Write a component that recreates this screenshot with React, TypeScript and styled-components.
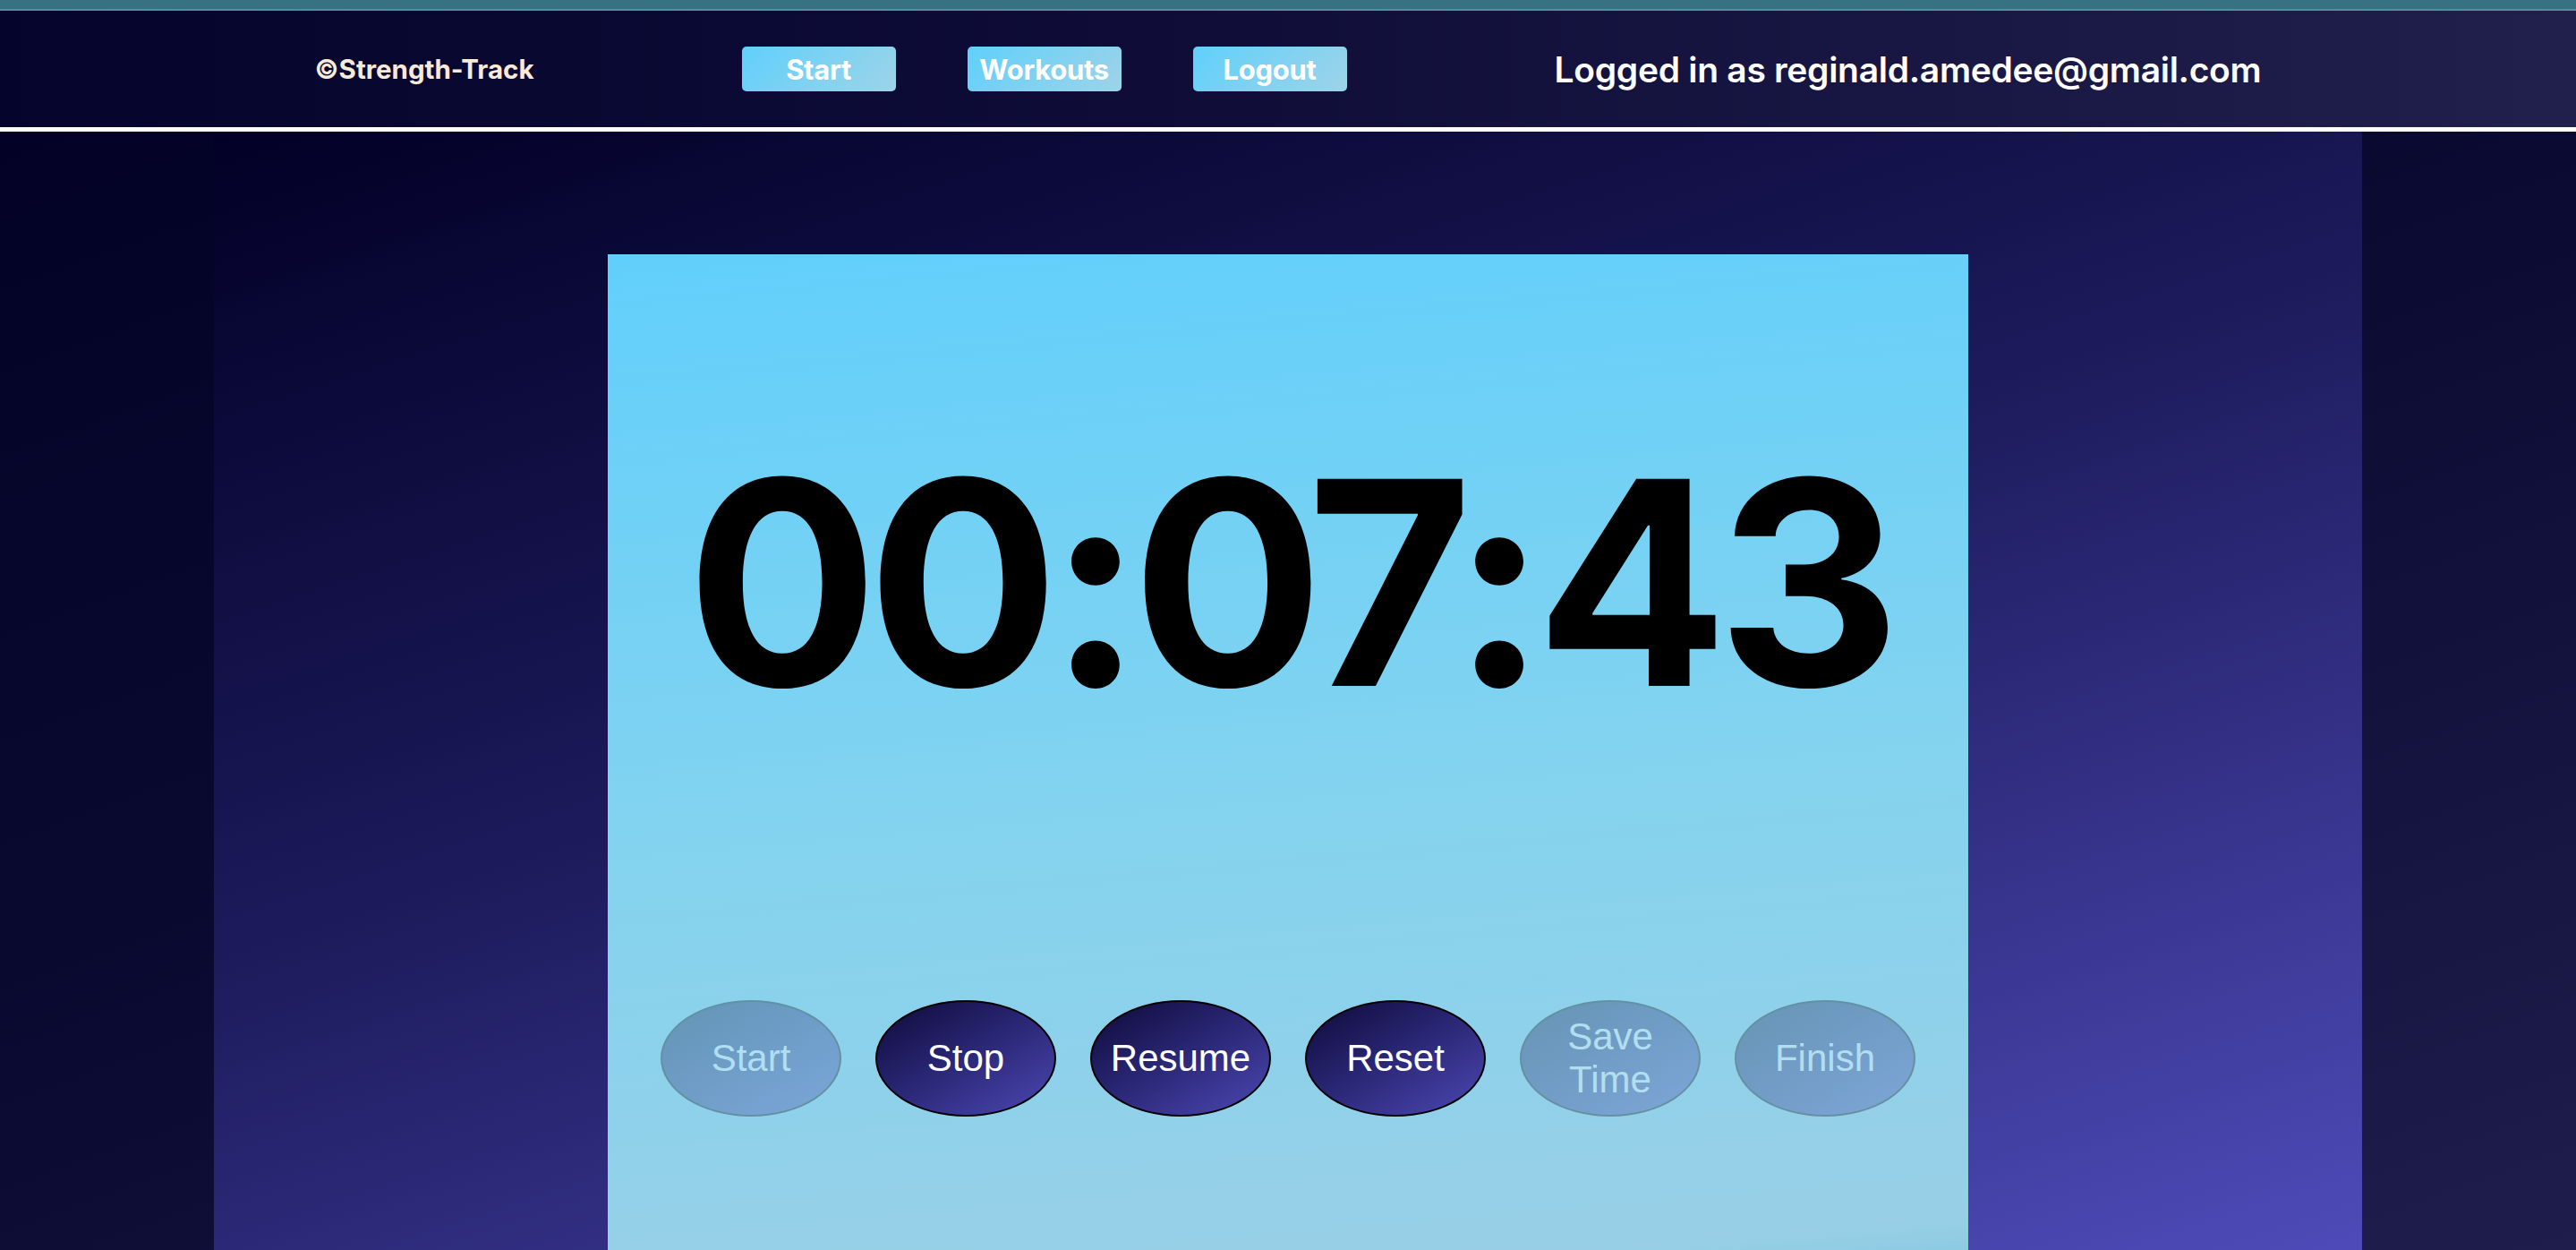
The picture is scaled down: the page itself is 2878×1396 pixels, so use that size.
import React from "react";
import styled, { createGlobalStyle } from "styled-components";

const GlobalStyle = createGlobalStyle`
  html, body {
    margin: 0;
    padding: 0;
  }
  body {
    min-height: 100vh;
    background: linear-gradient(160deg, #020024 0%, #0a0a32 50%, #1f1d4c 100%);
    font-family: Inter, "Noto Sans", sans-serif;
    overflow: hidden;
  }
  #root {
    min-height: 100vh;
    display: flex;
    flex-direction: column;
  }
`;

const TopStrip = styled.div`
  height: 10px;
  background: #377182;
  border-bottom: 2px solid #4e90a2;
`;

const Header = styled.header`
  height: 130px;
  display: flex;
  align-items: center;
  justify-content: center;
  gap: 232px;
  background: linear-gradient(to right, #05042c 0%, #0f0d38 45%, #211f4b 100%);
  border-bottom: 5px solid #ffffff;
`;

const Logo = styled.div`
  color: #f8ead8;
  font-size: 29.5px;
  font-weight: 700;
`;

const Nav = styled.nav`
  display: flex;
  gap: 80px;
`;

const NavButton = styled.button`
  width: 172px;
  height: 50px;
  border: none;
  border-radius: 5px;
  background: linear-gradient(135deg, #60d0fb 0%, #9ed3e8 100%);
  color: #ffffff;
  font-family: Inter, sans-serif;
  font-size: 31px;
  font-weight: 700;
  letter-spacing: -0.3px;
  padding: 0;
  cursor: pointer;
`;

const UserText = styled.div`
  color: #ffffff;
  font-size: 39px;
  font-weight: 600;
  letter-spacing: -0.3px;
`;

const Main = styled.main`
  flex: 1;
  display: flex;
  justify-content: center;
`;

const Band = styled.section`
  width: 2400px;
  display: flex;
  justify-content: center;
  padding-top: 137px;
  box-sizing: border-box;
  background: linear-gradient(162deg, #020026 0%, #1c1a5a 45%, #4e4bb9 100%);
`;

const Card = styled.div`
  width: 1520px;
  display: flex;
  flex-direction: column;
  align-items: center;
  padding-top: 208px;
  box-sizing: border-box;
  background: linear-gradient(175deg, #61cffb 0%, #84d3ef 55%, #98cfe6 97%, #8ccbe2 100%);
`;

const Timer = styled.div`
  font-family: Inter, sans-serif;
  font-size: 318px;
  font-weight: 700;
  line-height: 1;
  color: #000000;
  letter-spacing: -12.5px;
`;

const ButtonRow = styled.div`
  margin-top: 307px;
  display: flex;
  gap: 38px;
`;

const RoundButton = styled.button<{ $disabled?: boolean }>`
  width: 202px;
  height: 130px;
  box-sizing: border-box;
  border: 2px solid #000000;
  border-radius: 50%;
  background: linear-gradient(150deg, #0e0a38 0%, #2b2878 50%, #4c48b2 100%);
  color: #ffffff;
  font-family: "Liberation Sans", Arial, sans-serif;
  font-size: 42px;
  line-height: normal;
  padding: 1px 6px;
  opacity: ${(p) => (p.$disabled ? 0.3 : 1)};
  cursor: ${(p) => (p.$disabled ? "default" : "pointer")};
`;

const controls: { label: string; disabled: boolean }[] = [
  { label: "Start", disabled: true },
  { label: "Stop", disabled: false },
  { label: "Resume", disabled: false },
  { label: "Reset", disabled: false },
  { label: "Save Time", disabled: true },
  { label: "Finish", disabled: true },
];

export default function App() {
  return (
    <>
      <GlobalStyle />
      <TopStrip />
      <Header>
        <Logo>©Strength-Track</Logo>
        <Nav>
          <NavButton>Start</NavButton>
          <NavButton>Workouts</NavButton>
          <NavButton>Logout</NavButton>
        </Nav>
        <UserText>Logged in as reginald.amedee@gmail.com</UserText>
      </Header>
      <Main>
        <Band>
          <Card>
            <Timer>00:07:43</Timer>
            <ButtonRow>
              {controls.map((c) => (
                <RoundButton key={c.label} $disabled={c.disabled} disabled={c.disabled}>
                  {c.label}
                </RoundButton>
              ))}
            </ButtonRow>
          </Card>
        </Band>
      </Main>
    </>
  );
}
